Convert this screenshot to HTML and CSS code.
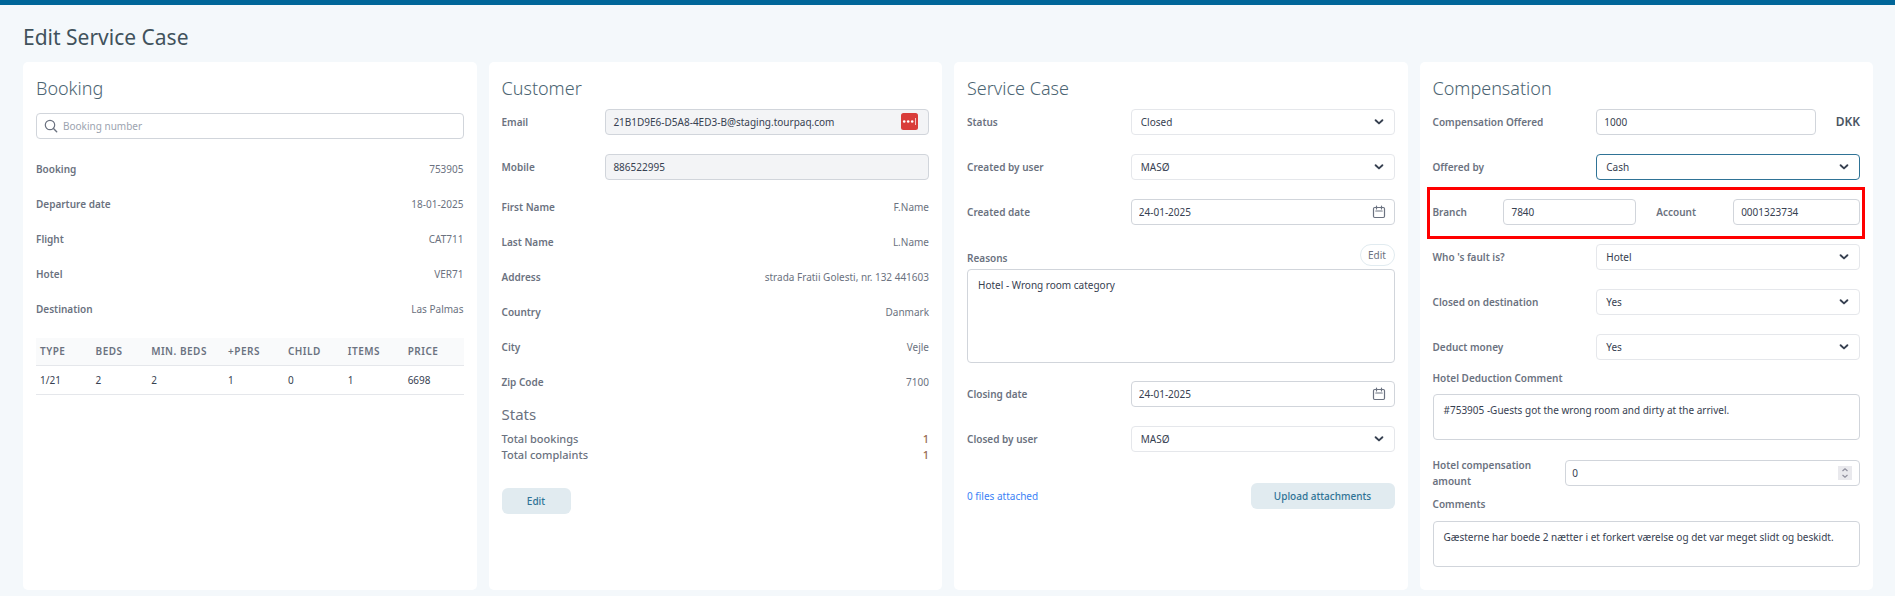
FILE: index.html
```html
<!DOCTYPE html>
<html lang="en">
<head>
<meta charset="utf-8">
<meta name="viewport" content="width=device-width, initial-scale=1">
<title>Edit Service Case</title>
<link rel="stylesheet" href="styles.css">
</head>
<body>
<svg class="sprite" aria-hidden="true">
  <symbol id="chevron" viewBox="0 0 10 8"><path d="M1.6 2.2 5 5.4 8.4 2.2" fill="none" stroke="currentColor" stroke-width="1.9" stroke-linecap="round" stroke-linejoin="round"/></symbol>
  <symbol id="calendar" viewBox="0 0 14 14"><rect x="1.5" y="2.5" width="11" height="10" rx="1.2" fill="none" stroke="currentColor" stroke-width="1.2"/><path d="M4.5 1v3M9.5 1v3M3.8 6h6.4" fill="none" stroke="currentColor" stroke-width="1.2" stroke-linecap="round"/></symbol>
</svg>
<div class="topbar"></div>
<main class="page">
  <h1 class="page-title">Edit Service Case</h1>
  <div class="cards">

    <section class="card">
      <h2 class="card-title">Booking</h2>
      <div class="field search">
        <svg class="search-icon" viewBox="0 0 14 14" aria-hidden="true"><circle cx="6" cy="6" r="4.7" fill="none" stroke="currentColor" stroke-width="1.2"/><path d="m9.5 9.5 3.2 3.2" stroke="currentColor" stroke-width="1.4" stroke-linecap="round"/></svg>
        <input class="input" type="text" placeholder="Booking number" aria-label="Booking number">
      </div>
      <dl class="facts facts-booking">
        <div class="fact"><dt>Booking</dt><dd>753905</dd></div>
        <div class="fact"><dt>Departure date</dt><dd>18-01-2025</dd></div>
        <div class="fact"><dt>Flight</dt><dd>CAT711</dd></div>
        <div class="fact"><dt>Hotel</dt><dd>VER71</dd></div>
        <div class="fact"><dt>Destination</dt><dd>Las Palmas</dd></div>
      </dl>
      <table class="rooms">
        <thead><tr><th class="c-type">Type</th><th class="c-beds">Beds</th><th class="c-min">Min. beds</th><th>+Pers</th><th>Child</th><th>Items</th><th>Price</th></tr></thead>
        <tbody><tr><td>1/21</td><td>2</td><td>2</td><td>1</td><td>0</td><td>1</td><td>6698</td></tr></tbody>
      </table>
    </section>

    <section class="card">
      <h2 class="card-title">Customer</h2>
      <div class="rows">
        <div class="row row-customer">
          <label for="email">Email</label>
          <div class="field">
            <input class="input readonly" id="email" type="text" value="21B1D9E6-D5A8-4ED3-B@staging.tourpaq.com" readonly>
            <svg class="pass-icon" viewBox="0 0 17 17" aria-hidden="true"><rect width="17" height="17" rx="2.5" fill="#d93d3a"/><circle cx="3.2" cy="8.5" r="1.3" fill="#fff"/><circle cx="7.2" cy="8.5" r="1.3" fill="#fff"/><circle cx="11.2" cy="8.5" r="1.3" fill="#fff"/><path d="M14.5 5v7" stroke="#fff" stroke-opacity=".7"/></svg>
          </div>
        </div>
        <div class="row row-customer">
          <label for="mobile">Mobile</label>
          <input class="input readonly" id="mobile" type="text" value="886522995" readonly>
        </div>
      </div>
      <dl class="facts facts-customer">
        <div class="fact"><dt>First Name</dt><dd>F.Name</dd></div>
        <div class="fact"><dt>Last Name</dt><dd>L.Name</dd></div>
        <div class="fact"><dt>Address</dt><dd>strada Fratii Golesti, nr. 132 441603</dd></div>
        <div class="fact"><dt>Country</dt><dd>Danmark</dd></div>
        <div class="fact"><dt>City</dt><dd>Vejle</dd></div>
        <div class="fact"><dt>Zip Code</dt><dd>7100</dd></div>
      </dl>
      <h3 class="stats-title">Stats</h3>
      <dl class="stats">
        <div class="stat"><dt>Total bookings</dt><dd>1</dd></div>
        <div class="stat"><dt>Total complaints</dt><dd>1</dd></div>
      </dl>
      <button class="button button-edit" type="button">Edit</button>
    </section>

    <section class="card">
      <h2 class="card-title">Service Case</h2>
      <div class="rows">
        <div class="row">
          <label for="status">Status</label>
          <div class="field"><select class="input select" id="status"><option>Closed</option></select><svg class="chevron" aria-hidden="true"><use href="#chevron"/></svg></div>
        </div>
        <div class="row">
          <label for="created-by">Created by user</label>
          <div class="field"><select class="input select" id="created-by"><option>MASØ</option></select><svg class="chevron" aria-hidden="true"><use href="#chevron"/></svg></div>
        </div>
        <div class="row">
          <label for="created-date">Created date</label>
          <div class="field"><input class="input" id="created-date" type="text" value="24-01-2025"><svg class="calendar" aria-hidden="true"><use href="#calendar"/></svg></div>
        </div>
      </div>
      <div class="reasons-head">
        <label for="reasons">Reasons</label>
        <button class="pill" type="button">Edit</button>
      </div>
      <textarea class="textarea reasons" id="reasons">Hotel - Wrong room category</textarea>
      <div class="rows">
        <div class="row">
          <label for="closing-date">Closing date</label>
          <div class="field"><input class="input" id="closing-date" type="text" value="24-01-2025"><svg class="calendar" aria-hidden="true"><use href="#calendar"/></svg></div>
        </div>
        <div class="row">
          <label for="closed-by">Closed by user</label>
          <div class="field"><select class="input select" id="closed-by"><option>MASØ</option></select><svg class="chevron" aria-hidden="true"><use href="#chevron"/></svg></div>
        </div>
      </div>
      <div class="files">
        <a class="files-link" href="#">0 files attached</a>
        <button class="button button-upload" type="button">Upload attachments</button>
      </div>
    </section>

    <section class="card">
      <h2 class="card-title">Compensation</h2>
      <div class="rows">
        <div class="row">
          <label for="offered">Compensation Offered</label>
          <div class="amount"><input class="input" id="offered" type="text" value="1000"><span class="currency">DKK</span></div>
        </div>
        <div class="row">
          <label for="offered-by">Offered by</label>
          <div class="field"><select class="input select active" id="offered-by"><option>Cash</option></select><svg class="chevron" aria-hidden="true"><use href="#chevron"/></svg></div>
        </div>
        <div class="row row-bank">
          <label for="branch">Branch</label>
          <input class="input" id="branch" type="text" value="7840">
          <label class="account-label" for="account">Account</label>
          <input class="input" id="account" type="text" value="0001323734">
        </div>
        <div class="row">
          <label for="fault">Who 's fault is?</label>
          <div class="field"><select class="input select" id="fault"><option>Hotel</option></select><svg class="chevron" aria-hidden="true"><use href="#chevron"/></svg></div>
        </div>
        <div class="row">
          <label for="closed-dest">Closed on destination</label>
          <div class="field"><select class="input select" id="closed-dest"><option>Yes</option></select><svg class="chevron" aria-hidden="true"><use href="#chevron"/></svg></div>
        </div>
        <div class="row">
          <label for="deduct">Deduct money</label>
          <div class="field"><select class="input select" id="deduct"><option>Yes</option></select><svg class="chevron" aria-hidden="true"><use href="#chevron"/></svg></div>
        </div>
      </div>
      <div class="note">
        <label for="deduction-comment">Hotel Deduction Comment</label>
        <textarea class="textarea" id="deduction-comment">#753905 -Guests got the wrong room and dirty at the arrivel.</textarea>
      </div>
      <div class="row row-hotel">
        <label for="hotel-amount">Hotel compensation amount</label>
        <div class="field">
          <input class="input number" id="hotel-amount" type="number" value="0">
          <svg class="spinner" viewBox="0 0 14 14" aria-hidden="true"><rect width="14" height="14" fill="#e9e9ed"/><path d="M4.5 5 7 2.8 9.5 5M4.5 9 7 11.2 9.5 9" fill="none" stroke="#8f8f9d" stroke-width="1.2"/></svg>
        </div>
      </div>
      <div class="note note-comments">
        <label for="comments">Comments</label>
        <textarea class="textarea" id="comments">Gæsterne har boede 2 nætter i et forkert værelse og det var meget slidt og beskidt.</textarea>
      </div>
    </section>

  </div>
</main>
</body>
</html>
```
FILE: styles.css
```css
* { box-sizing: border-box; }
body {
  margin: 0;
  background: #f4f8fb;
  color: #6b7280;
  font: 10px/16px "Noto Sans", "Open Sans", sans-serif;
}
h1, h2, h3, dl, dd { margin: 0; }
button, input, select, textarea { font: inherit; margin: 0; }
.sprite { display: block; width: 0; height: 0; }
.topbar { height: 5px; background: #006699; }
.page { padding: 16px 22px 6px 23px; }
.page-title { font-size: 21px; line-height: 32px; font-weight: 400; color: #41525c; }
.cards {
  display: grid;
  grid-template-columns: repeat(4, minmax(0, 1fr));
  gap: 12px;
  margin-top: 9px;
}
.card {
  display: flex;
  flex-direction: column;
  padding: 13px 13px 23px;
  background: #fff;
  border-radius: 5px;
}
.card-title { font-size: 18px; line-height: 26px; font-weight: 300; color: #4b6472; }
label, dt { font-weight: 600; }

.input, .textarea {
  display: block;
  width: 100%;
  min-width: 0;
  border: 1px solid #d1d5db;
  border-radius: 4px;
  background: #fff;
  color: #374151;
}
.input { height: 26px; padding: 0 7px; }
.textarea { height: 46px; padding: 7px 10px; resize: none; overflow: hidden; }
.input::placeholder { color: #9ca3af; opacity: 1; }
.readonly { background: #f3f4f6; }
.select { padding: 0 9px; appearance: none; border-color: #e5e7eb; }
.active { border-color: #2f7396; }
.field { position: relative; min-width: 0; }
.chevron, .calendar, .search-icon, .pass-icon, .spinner { position: absolute; pointer-events: none; }
.chevron { width: 10px; height: 8px; right: 11px; top: 9px; color: #374151; }
.calendar { width: 14px; height: 14px; right: 9px; top: 6px; }
.search-icon { width: 14px; height: 14px; left: 8px; top: 6px; }
.pass-icon { width: 17px; height: 17px; right: 11px; top: 4px; }
.spinner { width: 14px; height: 14px; right: 8px; top: 6px; }
.number { appearance: textfield; padding: 0 6px; }
.number::-webkit-inner-spin-button { appearance: none; }

.search { margin-top: 12px; }
.search .input { padding-left: 26px; }

.fact { display: flex; justify-content: space-between; align-items: center; height: 35px; }
.facts-booking { margin-top: 12px; }
.facts-customer { margin-top: 9px; }

.rooms {
  width: 100%;
  margin-top: 12px;
  border-collapse: collapse;
  table-layout: fixed;
  text-align: left;
}
.rooms th {
  height: 27px;
  padding: 0 4px;
  border-bottom: 1px solid #e5e7eb;
  background: #f9fafb;
  font-weight: 600;
  letter-spacing: 0.05em;
  text-transform: uppercase;
  white-space: nowrap;
}
.rooms td { height: 29px; padding: 0 4px; border-bottom: 1px solid #e5e7eb; color: #374151; }
.c-type, .c-beds { width: 13%; }
.c-min { width: 18%; }

.rows { display: grid; gap: 19px; margin-top: 8px; }
.row { display: grid; grid-template-columns: 164fr 264fr; align-items: center; }
.row-customer { grid-template-columns: 104fr 324fr; }
.row-bank { position: relative; grid-template-columns: 71fr 133fr 97fr 127fr; }
.row-bank::after {
  content: "";
  position: absolute;
  inset: -12px -5px -14px -6px;
  border: 3px solid #ff0000;
  pointer-events: none;
}
.account-label { padding-left: 20px; }
.row-hotel { grid-template-columns: 133fr 295fr; margin-top: 17px; }
.row-hotel label { padding-right: 20px; }
.amount { display: flex; align-items: center; justify-content: space-between; gap: 20px; }
.currency { font-size: 12px; font-weight: 600; color: #4b5563; }

.stats-title { margin-top: 5px; font-size: 15px; line-height: 20px; font-weight: 400; }
.stats { margin-top: 7px; font-size: 11px; }
.stat { display: flex; justify-content: space-between; }
.stat dt { font-weight: 500; }
.stat dd { font-weight: 500; color: #96684f; }

.button {
  height: 26px;
  padding: 0;
  border: 0;
  border-radius: 6px;
  background: #e1ebf0;
  color: #2f7396;
  font-weight: 500;
}
.button-edit { width: 69px; margin-top: 25px; }
.button-upload { width: 144px; }
.reasons-head { display: flex; justify-content: space-between; align-items: flex-end; margin-top: 19px; }
.pill {
  width: 35px;
  height: 22px;
  padding: 0;
  border: 1px solid #e1ebf0;
  border-radius: 11px;
  background: #fff;
  color: #6b7280;
}
.reasons { height: 94px; margin: 3px 0 10px; }
.files { display: flex; justify-content: space-between; align-items: center; margin-top: 31px; }
.files-link { color: #3b82f6; text-decoration: none; font-weight: 400; }

.note { display: flex; flex-direction: column; gap: 8px; margin-top: 10px; }
.note-comments { gap: 9px; margin-top: 7px; }
```
